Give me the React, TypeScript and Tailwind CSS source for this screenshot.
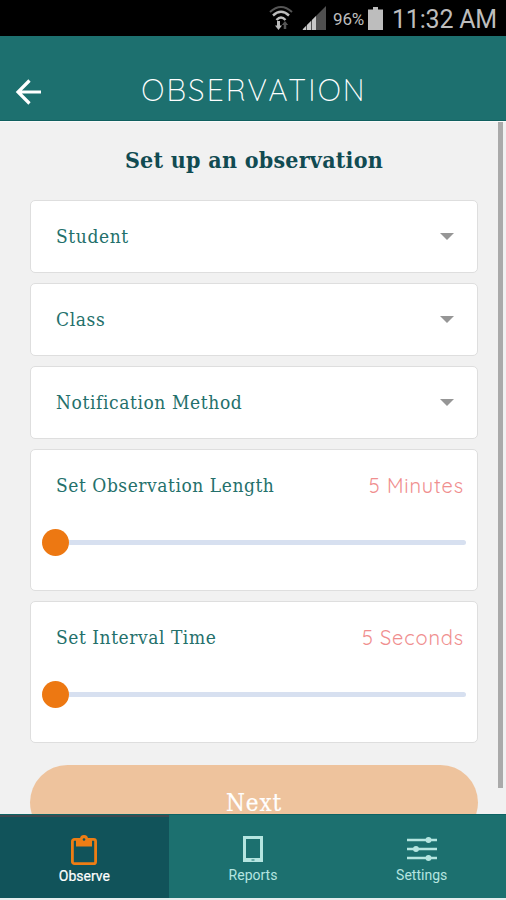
import type { ReactNode } from "react";

const slab = "font-['Roboto_Slab','DejaVu_Serif_Condensed','DejaVu_Serif',serif] [font-stretch:condensed]";
const round = "font-['Quicksand','Lato',sans-serif]";

const FIELDS = ["Student", "Class", "Notification Method"];

export default function App() {
  return (
    <div className="flex h-[900px] w-[506px] flex-col overflow-hidden bg-[#f1f1f1] font-['Roboto',sans-serif]">
      <StatusBar />
      <header className="relative flex h-[85px] shrink-0 items-end justify-center border-b border-[#10605f] bg-[#1d706f] pb-[11px] pl-[2px]">
        <button type="button" aria-label="Back" className="absolute bottom-[14px] left-[15px] text-white">
          <svg className="h-[28px] w-[27px]" viewBox="0 0 27 28" fill="none" stroke="currentColor" strokeWidth={3.2}>
            <path d="M26 14H3M14.500 2.500L3 14l11.500 11.500" />
          </svg>
        </button>
        <h1 className={`${round} text-[30px] leading-[38px] font-light tracking-[2.1px] text-white`}>OBSERVATION</h1>
      </header>

      <main className="relative min-h-0 flex-1 overflow-hidden border-t border-[#fafafa] pr-[28px] pl-[30px]">
        <h2 className={`${slab} pt-[22px] text-center text-[23px] leading-[32px] font-bold tracking-[0.25px] text-[#114b52]`}>
          Set up an observation
        </h2>
        <div className="mt-[24px] flex flex-col gap-[10px]">
          {FIELDS.map((label) => (
            <SelectCard key={label} label={label} />
          ))}
          <SliderCard label="Set Observation Length" value="5 Minutes" />
          <SliderCard label="Set Interval Time" value="5 Seconds" />
        </div>
        <button
          type="button"
          className={`${slab} mt-[22px] h-[75px] w-full rounded-[38px] bg-[#eec39d] text-[24px] tracking-[0.9px] text-white [-webkit-text-stroke:0.2px_white]`}
        >
          Next
        </button>
        <div className="absolute top-0 right-[3px] h-[666px] w-[5px] bg-[#aaaaaa]" />
      </main>

      <nav className="flex h-[84px] shrink-0 border-t border-[#0d6364] bg-[#1c706f]">
        <Tab label="Observe" active>
          <svg className="mt-[2px] h-[31px] w-[28px]" viewBox="0 0 28 31" fill="none">
            <rect x="2.400" y="4.300" width="23.200" height="24.400" rx="2" stroke="#ed7d14" strokeWidth="2.800" />
            <path d="M6 4h4a4 4 0 0 1 8 0h4v7.500H6z" fill="#ed7d14" />
            <circle cx="14" cy="4.500" r="1.300" fill="#11535a" />
          </svg>
        </Tab>
        <Tab label="Reports">
          <svg className="h-[28px] w-[22px]" viewBox="0 0 22 28" fill="none">
            <path d="M1 1h20v26H1zM4 4v19h14V4z" fill="#b5e5e0" fillRule="evenodd" />
            <path d="M9.500 25h3" stroke="#1c706f" />
          </svg>
        </Tab>
        <Tab label="Settings">
          <svg className="h-[28px] w-[32px]" viewBox="0 0 32 28" fill="#b5e5e0" stroke="#b5e5e0" strokeWidth="2.300">
            <path d="M1 5h30M1 14h30M1 23h30" />
            <circle cx="22.500" cy="5" r="1.800" />
            <circle cx="10" cy="14" r="1.800" />
            <circle cx="22.500" cy="23" r="1.800" />
          </svg>
        </Tab>
      </nav>
      <div className="h-[2px] shrink-0 bg-[#e6eeee]" />
    </div>
  );
}

function StatusBar() {
  return (
    <div className="flex h-[36px] shrink-0 items-center justify-end bg-black pr-[9px] text-[#bdbdbd]">
      <svg className="h-[28px] w-[24px]" viewBox="0 0 24 28" fill="none" stroke="currentColor" strokeWidth="2">
        <path d="M1 8Q12-2 23 8" stroke="#555" />
        <path d="M4 11.500Q12 4 20 11.500M7.500 16Q12 11 16.500 16" strokeWidth="2.400" />
        <path d="M9.500 17v6" strokeWidth="3" />
        <path d="M6 21.500h7L9.500 26z" fill="currentColor" stroke="none" />
        <path d="M16 25v-5" stroke="#555" strokeWidth="2.500" />
        <path d="M12.800 21h6.400L16 17z" fill="#555" stroke="none" />
      </svg>
      <svg className="ml-[9px] h-[24px] w-[24px]" viewBox="0 0 24 24">
        <path d="M0 24L24 0v24z" fill="#505050" />
        <path d="M1 23l3-3v4H1zM5 19l4-4v9H5zM10 14l4-4v14h-4z" fill="#c8c8c8" />
      </svg>
      <span className="mt-[2px] ml-[7px] text-[17px] leading-none tracking-[-0.2px]">96%</span>
      <svg className="ml-[4px] h-[23px] w-[15px]" viewBox="0 0 15 23" fill="currentColor">
        <path d="M5 0h5v2.500h5V23H0V2.500h5z" />
      </svg>
      <span className="mt-[2px] ml-[9px] text-[25px] leading-none tracking-[-0.2px]">11:32 AM</span>
    </div>
  );
}

function SelectCard({ label }: { label: string }) {
  return (
    <button
      type="button"
      className="flex h-[73px] w-full items-center justify-between rounded-[5px] border border-[#dedede] bg-white pr-[23px] pl-[25px]"
    >
      <span className={`${slab} text-[19px] tracking-[0.6px] text-[#24706b]`}>{label}</span>
      <svg className="h-[7px] w-[14px]" viewBox="0 0 14 7" fill="#969696">
        <path d="M0 0h14L7 7z" />
      </svg>
    </button>
  );
}

function SliderCard({ label, value }: { label: string; value: string }) {
  return (
    <section className="h-[142px] rounded-[5px] border border-[#dedede] bg-white px-[11px] pt-[21px]">
      <div className="flex h-[28px] items-center justify-between pr-[2px] pl-[14px]">
        <span className={`${slab} text-[19px] tracking-[0.55px] text-[#24706b]`}>{label}</span>
        <span className={`${round} mt-[2px] text-[20px] font-normal tracking-[0.85px] text-[#f08e8e]`}>{value}</span>
      </div>
      <div className="mt-[30px] flex h-[27px] items-center">
        <span className="h-[27px] w-[27px] rounded-full bg-[#ed7812]" />
        <span className="h-[5px] flex-1 rounded-r-full bg-[#d7e0f0]" />
      </div>
    </section>
  );
}

function Tab({ label, active = false, children }: { label: string; active?: boolean; children: ReactNode }) {
  return (
    <button
      type="button"
      className={`flex flex-1 flex-col items-center border-t-2 pt-[16px] ${
        active ? "border-[#3d4950] bg-[#11535a] text-white" : "border-transparent text-[#b5e5e0]"
      }`}
    >
      <span className="flex h-[32px] items-center">{children}</span>
      <span
        className={`text-[14px] leading-[18px] ${active ? "mt-[2px] [-webkit-text-stroke:0.2px_white]" : "mt-px"}`}
      >
        {label}
      </span>
    </button>
  );
}
